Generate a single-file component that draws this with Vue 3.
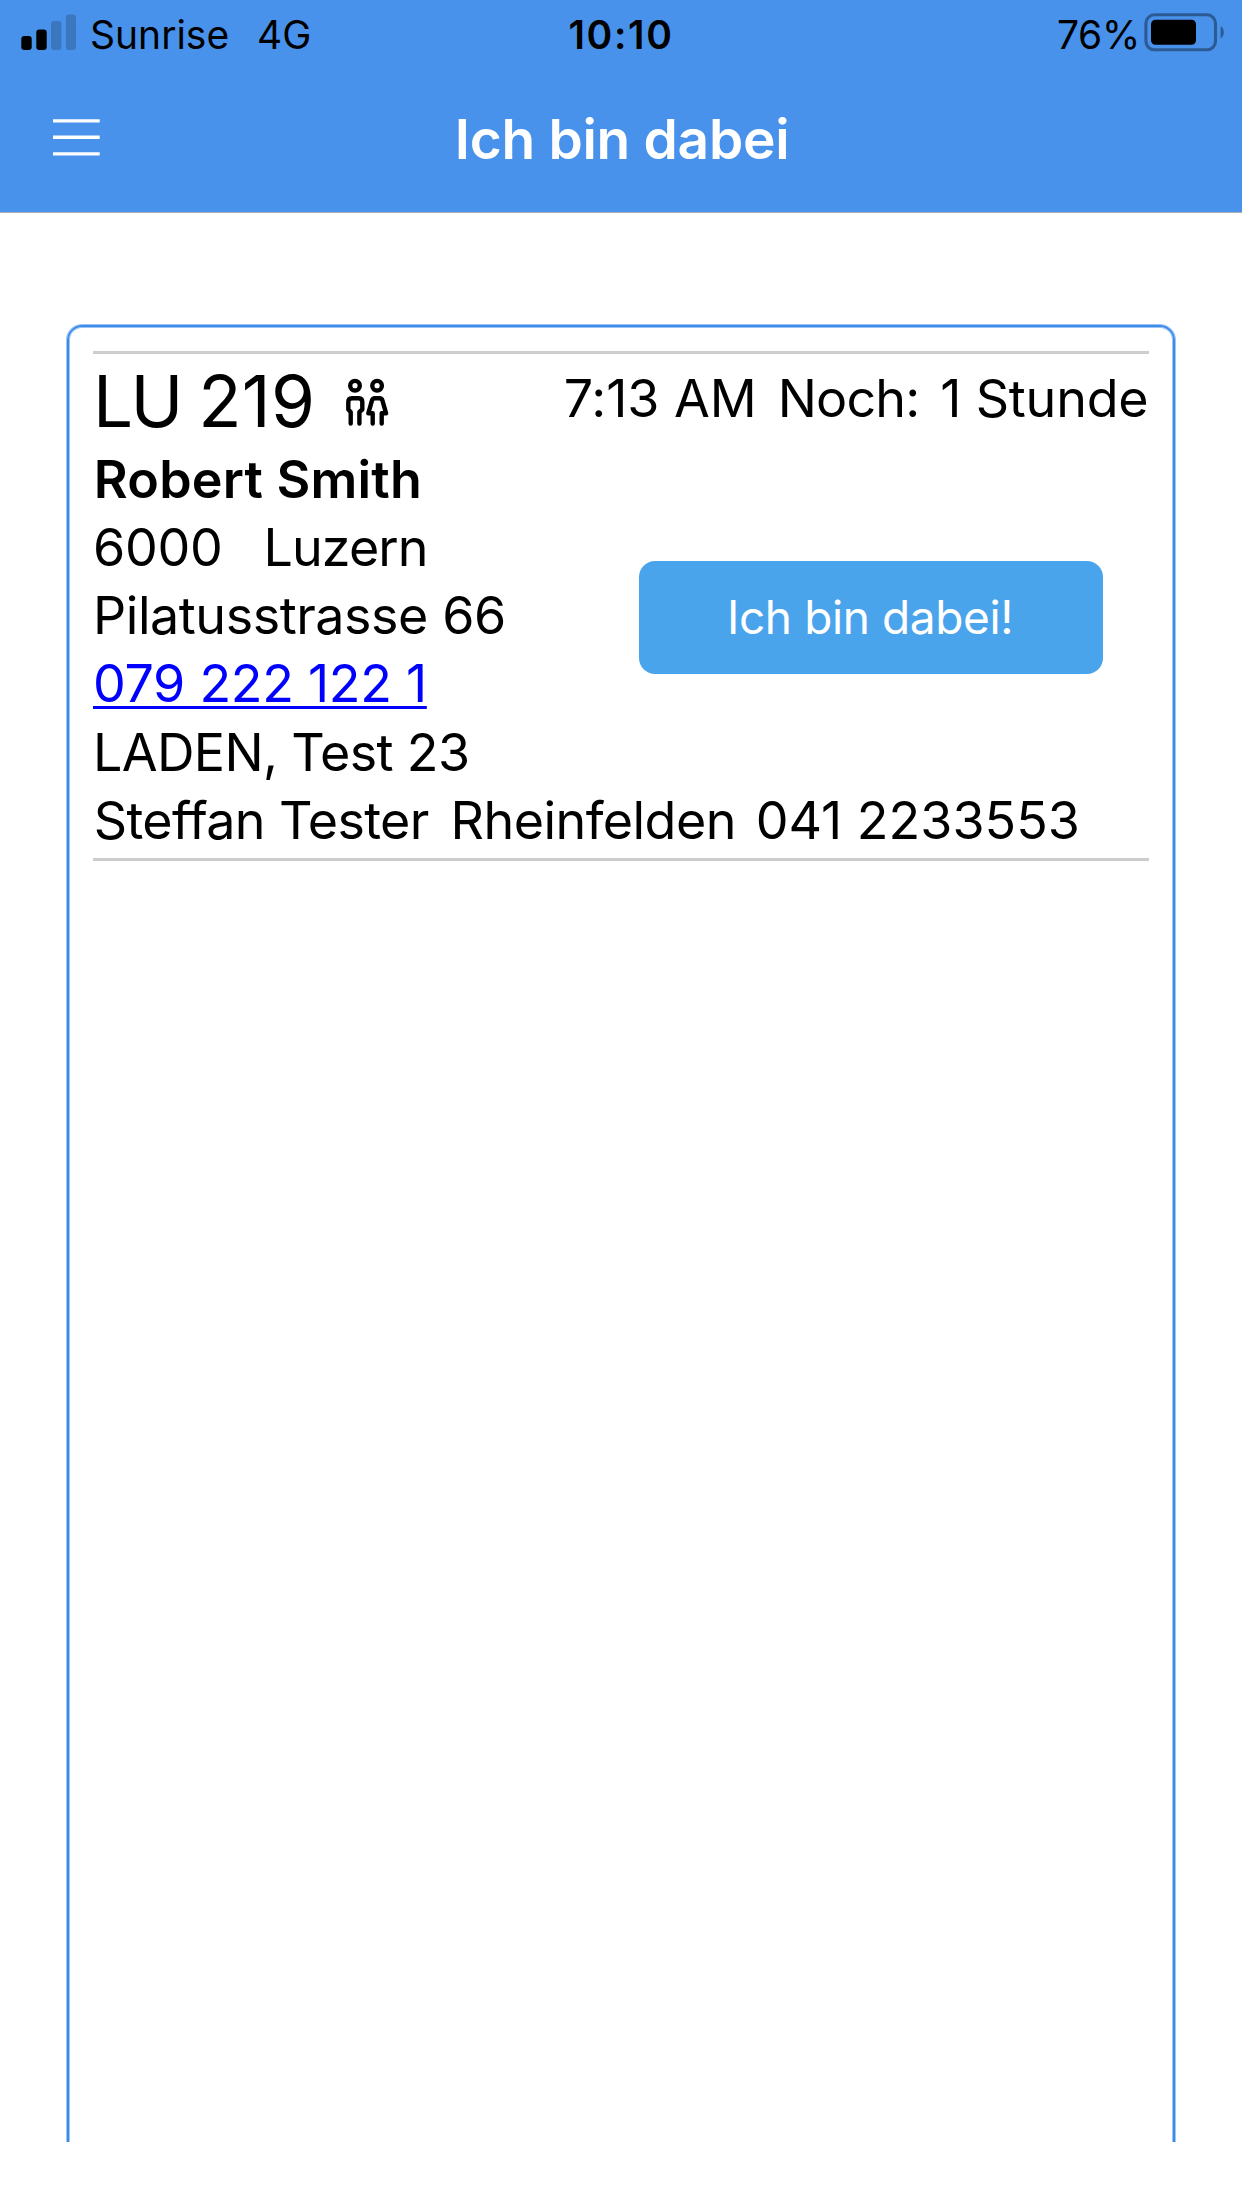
<script setup>
const job = {
  region: 'LU ',
  number: '219',
  time: '7:13 AM',
  label: 'Noch:',
  remaining: '1 Stunde',
  name: 'Robert Smith',
  zip: '6000',
  city: 'Luzern',
  street: 'Pilatusstrasse 66',
  phone: '079 222 122 1',
  note: 'LADEN, Test 23',
  contact: ['Steffan Tester', 'Rheinfelden', '041 2233553'],
}
</script>

<template>
  <div class="screen">
    <header class="header">
      <div class="status">
        <div class="status-left">
          <svg class="signal" width="55" height="36" viewBox="0 0 55 36">
            <rect x="0.3" y="22" width="10.4" height="14" rx="3" />
            <rect x="15.3" y="15.5" width="10.4" height="20.5" rx="3" />
            <rect x="30" y="7" width="10.4" height="29" rx="3" fill="#3b77bf" />
            <rect x="44.8" y="0.5" width="10.2" height="35.5" rx="3" fill="#3b77bf" />
          </svg>
          <span class="carrier">Sunrise</span>
          <span class="network">4G</span>
        </div>
        <span class="clock">10:10</span>
        <div class="status-right">
          <span class="percent">76%</span>
          <svg class="battery" width="82" height="40" viewBox="0 0 82 40">
            <rect x="2.9" y="2.8" width="69.6" height="35" rx="8.5" fill="none" stroke="#2c5b93" stroke-width="3.1" />
            <rect x="8" y="7.8" width="45" height="25" rx="4.5" />
            <path d="M77.6 14 Q80.8 16 80.8 20.2 Q80.8 24.5 77.6 26.5Z" fill="#2c5b93" />
          </svg>
        </div>
      </div>
      <nav class="nav">
        <button class="menu" aria-label="Menu">
          <svg width="47" height="38" viewBox="0 0 47 38">
            <path d="M0 2.9H46.7M0 19.3H46.7M0 35.9H46.7" stroke="#fff" stroke-width="3.4" />
          </svg>
        </button>
        <h1 class="title">Ich bin dabei</h1>
      </nav>
    </header>

    <main class="content">
      <section class="card">
        <article class="job">
          <div class="top">
            <span class="code"><span class="region">{{ job.region }}</span><span class="digits">{{ job.number }}</span></span>
            <svg class="people" width="46" height="52" viewBox="344 376 46 52" fill="none" stroke="#000" stroke-width="4.4" stroke-linecap="round" stroke-linejoin="round">
              <circle cx="355" cy="385.7" r="4.8" />
              <circle cx="377.1" cy="385.7" r="4.8" />
              <path d="M350.7 423.6V412L348.3 409.5V402Q348.3 398.2 351.8 398.2H358.8Q362.3 398.2 362.3 402V409.5L359.4 412V423.6" />
              <path d="M372.7 423.6V413.3H368.3L372 400.4Q372.7 398.2 374.9 398.2H379.5Q381.7 398.2 382.4 400.4L386.1 413.3H381.7V423.6" />
            </svg>
            <div class="when">
              <span class="time">{{ job.time }}</span>
              <span class="label">{{ job.label }}</span>
              <span class="remaining">{{ job.remaining }}</span>
            </div>
          </div>
          <div class="line name">{{ job.name }}</div>
          <div class="middle">
            <div class="details">
              <div class="line place">
                <span class="zip">{{ job.zip }}</span>
                <span class="city">{{ job.city }}</span>
              </div>
              <div class="line street">{{ job.street }}</div>
              <div class="line call"><a class="phone" href="tel:0792221221">{{ job.phone }}</a></div>
              <div class="line note">{{ job.note }}</div>
            </div>
            <button class="join">Ich bin dabei!</button>
          </div>
          <div class="line contact">
            <span class="person">{{ job.contact[0] }}</span>
            <span class="town">{{ job.contact[1] }}</span>
            <span class="number">{{ job.contact[2] }}</span>
          </div>
        </article>
      </section>
    </main>
  </div>
</template>

<style>
body {
  background: #fff;
}
</style>

<style scoped>
.screen {
  width: 1242px;
  height: 2208px;
  overflow: hidden;
  background: #fff;
  color: #000;
  font-family: Inter, "Liberation Sans", sans-serif;
}
.screen * {
  box-sizing: border-box;
}
svg {
  display: block;
  flex: none;
}
span,
a {
  white-space: pre;
}
button {
  border: 0;
  padding: 0;
  background: none;
  font-family: inherit;
}

.header {
  height: 213px;
  background: #4892ec;
  border-bottom: 1px solid #a9b0b8;
}
.status {
  display: grid;
  grid-template-columns: 1fr auto 1fr;
  height: 68px;
  padding: 0 17px 0 21px;
  font-size: 39px;
  line-height: 69px;
}
.status-left,
.status-right {
  display: flex;
}
.status-right {
  justify-content: flex-end;
}
.signal {
  margin: 14px 14px 0 0;
}
.network {
  margin-left: 27.7px;
  letter-spacing: 0.3px;
}
.clock {
  margin-left: -4px;
  font-weight: 600;
  letter-spacing: 1.64px;
}
.percent {
  letter-spacing: -0.3px;
}
.battery {
  margin: 12px 0 0 3px;
}
.nav {
  display: grid;
  grid-template-columns: 200px 1fr 200px;
  height: 144px;
}
.menu {
  padding: 50px 0 0 53px;
  display: flex;
  align-items: flex-start;
}
.title {
  margin: 0 0 0 2px;
  text-align: center;
  color: #fff;
  font-size: 55px;
  font-weight: 600;
  line-height: 142px;
  letter-spacing: -0.27px;
}

.content {
  height: 1929px;
  padding: 112px 67px 0;
  overflow: hidden;
}
.card {
  height: 1900px;
  padding: 24px 24px 0;
  border: 2px solid #3b8bea;
  border-radius: 15px;
  box-shadow: 0 0 0 1px rgba(59, 139, 234, 0.5), inset 0 0 0 1px rgba(59, 139, 234, 0.5);
}
.job {
  height: 510px;
  border: solid #cdcdcd;
  border-width: 3px 0;
}
.top {
  display: flex;
  height: 91px;
}
.code {
  width: 225px;
  padding-top: 2px;
  font-size: 71px;
  line-height: 91px;
}
.region {
  letter-spacing: -2.6px;
}
.digits {
  letter-spacing: 0.3px;
}
.people {
  margin: 22px 0 0 26px;
}
.when {
  display: flex;
  margin: 0 0.6px 0 auto;
  font-size: 52px;
  line-height: 90px;
}
.time {
  letter-spacing: -0.04px;
}
.label {
  margin-left: 21px;
  letter-spacing: -0.83px;
}
.remaining {
  margin-left: 20.9px;
  letter-spacing: -0.21px;
}
.line {
  display: flex;
  height: 68.2px;
  font-size: 52px;
  line-height: 70px;
  white-space: pre;
}
.call {
  line-height: 68.2px;
}
.name,
.contact {
  padding-left: 0.8px;
}
.name {
  font-weight: 600;
  letter-spacing: 0.21px;
}
.middle {
  display: flex;
  justify-content: space-between;
  align-items: flex-start;
}
.zip {
  letter-spacing: -0.29px;
}
.city {
  margin-left: 41px;
  letter-spacing: -0.9px;
}
.street {
  letter-spacing: -0.45px;
}
.phone {
  color: #00f;
  letter-spacing: -0.3px;
  text-decoration: underline;
  text-decoration-thickness: 3px;
  text-decoration-skip-ink: none;
  text-underline-offset: 4px;
}
.note {
  letter-spacing: -0.66px;
}
.join {
  width: 464px;
  height: 113px;
  margin: 48px 46px 0 0;
  padding: 0 2px 2px 0;
  border-radius: 16px;
  background: #4aa4ec;
  color: #fff;
  font-size: 46px;
  letter-spacing: -0.39px;
}
.person {
  letter-spacing: -0.66px;
}
.town {
  margin-left: 22px;
  letter-spacing: -0.56px;
}
.number {
  margin-left: 19.9px;
}
</style>
